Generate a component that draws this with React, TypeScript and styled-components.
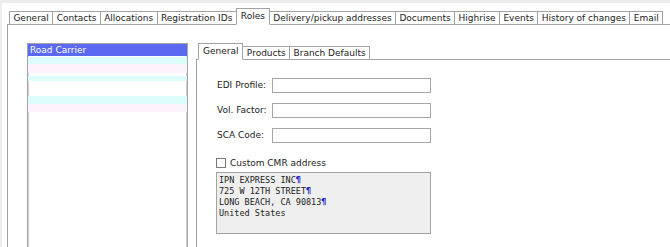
import React from "react";
import styled, { createGlobalStyle } from "styled-components";

const GlobalStyle = createGlobalStyle`
  html, body {
    margin: 0;
    padding: 0;
    background: #ffffff;
  }
  body {
    font-family: "DejaVu Sans", "Liberation Sans", sans-serif;
    font-size: 9px;
    color: #222222;
  }
`;

const Window = styled.div`
  height: 247px;
  box-sizing: border-box;
  overflow: hidden;
  border-top: 3px solid #ececec;
  border-left: 2px solid #eeeeee;
  padding: 5px 0 0 5px;
`;

const TabStrip = styled.div`
  display: flex;
  align-items: flex-end;
  height: 16px;
  padding-left: 2px;
  border-bottom: 1px solid #a3a3a3;
`;

const Tab = styled.div<{ $active?: boolean }>`
  position: relative;
  z-index: ${(p) => (p.$active ? 1 : 0)};
  box-sizing: border-box;
  height: ${(p) => (p.$active ? 17 : 13)}px;
  margin-bottom: ${(p) => (p.$active ? -1 : 0)}px;
  padding: ${(p) => (p.$active ? "1px 4px 0" : "0 3.4px")};
  border: 1px solid #a3a3a3;
  border-bottom: ${(p) => (p.$active ? "1px solid #ffffff" : "none")};
  background: #ffffff;
  line-height: 12px;
  white-space: nowrap;

  & + & {
    margin-left: -1px;
  }
`;

const Panel = styled.div`
  display: flex;
  align-items: flex-start;
  height: 230px;
  border-left: 1px solid #a3a3a3;
  padding: 18px 0 0 19px;
`;

const RoleList = styled.div`
  box-sizing: border-box;
  width: 161px;
  height: 260px;
  flex-shrink: 0;
  border: 1px solid #a6a6a6;
  box-shadow: inset 1px 0 0 #cfcfcf, inset -1px 0 0 #cfcfcf;
  background: #ffffff;
`;

const RoleRow = styled.div<{ $tint?: string; $h: number; $selected?: boolean }>`
  height: ${(p) => p.$h}px;
  line-height: ${(p) => p.$h}px;
  padding-left: 2px;
  background: ${(p) => (p.$selected ? "#5b69f2" : p.$tint || "transparent")};
  color: ${(p) => (p.$selected ? "#ffffff" : "#222222")};
  white-space: nowrap;
`;

const RolePane = styled.div`
  flex: 1;
  margin-left: 8px;
  display: flex;
  flex-direction: column;
`;

const RoleBody = styled.div`
  height: 200px;
  border-left: 1px solid #a3a3a3;
  padding: 18px 0 0 19px;
  display: flex;
  flex-direction: column;
`;

const FieldGrid = styled.div`
  display: grid;
  grid-template-columns: 56px 159px;
  row-gap: 10px;
  align-items: center;
`;

const FieldLabel = styled.label`
  padding-left: 1px;
  line-height: 15px;
`;

const TextInput = styled.div`
  box-sizing: border-box;
  height: 15px;
  border: 1px solid #a6a6a6;
  background: #ffffff;
`;

const CheckRow = styled.label`
  display: flex;
  align-items: center;
  gap: 4px;
  margin-top: 14px;
  height: 12px;
`;

const CheckBox = styled.span`
  box-sizing: border-box;
  width: 10px;
  height: 10px;
  border: 1px solid #7a7a7a;
  background: #ffffff;
`;

const AddressBox = styled.div`
  box-sizing: border-box;
  width: 215px;
  height: 62px;
  margin-top: 3px;
  padding: 2px 0 0 2px;
  border: 1px solid #a3a3a3;
  background: #efefef;
  font-family: "DejaVu Sans Mono", "Liberation Mono", monospace;
  font-size: 8.5px;
  line-height: 11px;
  color: #222222;
  white-space: pre;
`;

const Pilcrow = styled.span`
  color: #2222c0;
  font-weight: bold;
`;

const mainTabs = [
  "General",
  "Contacts",
  "Allocations",
  "Registration IDs",
  "Roles",
  "Delivery/pickup addresses",
  "Documents",
  "Highrise",
  "Events",
  "History of changes",
  "Email",
];

const roleTabs = ["General", "Products", "Branch Defaults"];

// faint leftover rows below the selected role
const ghostRows: { h: number; tint?: string }[] = [
  { h: 1 },
  { h: 7, tint: "#ddfdfd" },
  { h: 9, tint: "#fdf3fc" },
  { h: 3 },
  { h: 5, tint: "#ddfdfd" },
  { h: 15 },
  { h: 8, tint: "#ddfdfd" },
  { h: 8, tint: "#fdf3fc" },
];

const addressLines = [
  { text: "IPN EXPRESS INC", mark: true },
  { text: "725 W 12TH STREET", mark: true },
  { text: "LONG BEACH, CA 90813", mark: true },
  { text: "United States", mark: false },
];

const fields = ["EDI Profile:", "Vol. Factor:", "SCA Code:"];

const App: React.FC = () => {
  return (
    <Window>
      <GlobalStyle />
      <TabStrip>
        {mainTabs.map((t) => (
          <Tab key={t} $active={t === "Roles"}>
            {t}
          </Tab>
        ))}
      </TabStrip>
      <Panel>
        <RoleList>
          <RoleRow $h={12} $selected>
            Road Carrier
          </RoleRow>
          {ghostRows.map((r, i) => (
            <RoleRow key={i} $h={r.h} $tint={r.tint} />
          ))}
        </RoleList>
        <RolePane>
          <TabStrip>
            {roleTabs.map((t) => (
              <Tab key={t} $active={t === "General"}>
                {t}
              </Tab>
            ))}
          </TabStrip>
          <RoleBody>
            <FieldGrid>
              {fields.map((f) => (
                <React.Fragment key={f}>
                  <FieldLabel>{f}</FieldLabel>
                  <TextInput />
                </React.Fragment>
              ))}
            </FieldGrid>
            <CheckRow>
              <CheckBox />
              Custom CMR address
            </CheckRow>
            <AddressBox>
              {addressLines.map((l) => (
                <div key={l.text}>
                  {l.text}
                  {l.mark && <Pilcrow>¶</Pilcrow>}
                </div>
              ))}
            </AddressBox>
          </RoleBody>
        </RolePane>
      </Panel>
    </Window>
  );
};

export default App;
